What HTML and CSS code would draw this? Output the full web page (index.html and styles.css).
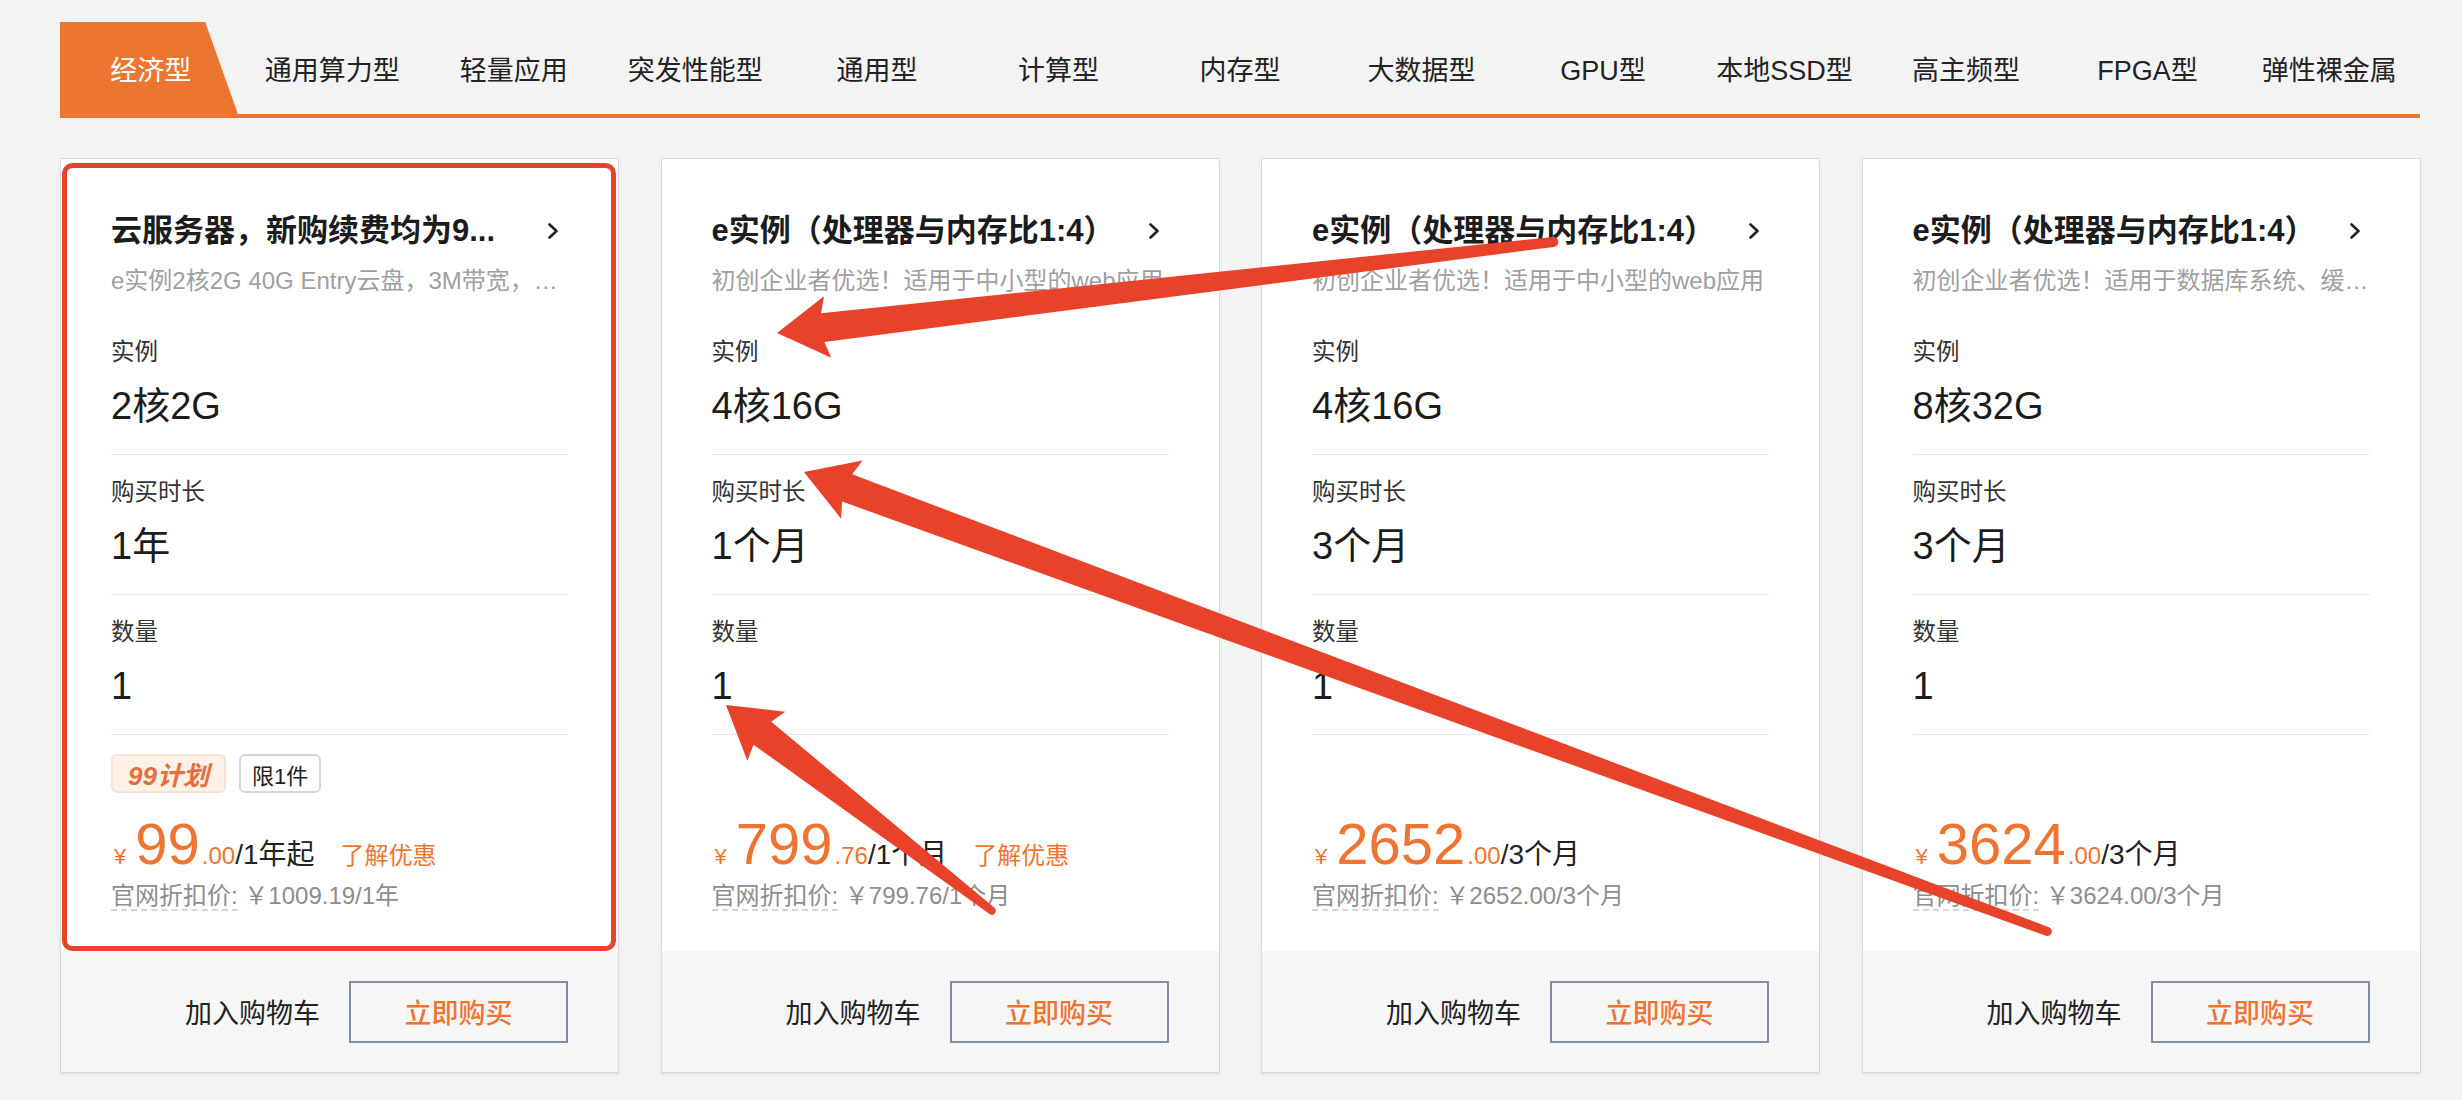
FILE: index.html
```html
<!DOCTYPE html>
<html lang="zh-CN">
<head>
<meta charset="utf-8">
<title>经济型</title>
<link rel="stylesheet" href="styles.css">
</head>
<body>
<div class="page">
  <nav class="tabs">
    <div class="tab active">经济型</div>
    <div class="tab">通用算力型</div>
    <div class="tab">轻量应用</div>
    <div class="tab">突发性能型</div>
    <div class="tab">通用型</div>
    <div class="tab">计算型</div>
    <div class="tab">内存型</div>
    <div class="tab">大数据型</div>
    <div class="tab">GPU型</div>
    <div class="tab">本地SSD型</div>
    <div class="tab">高主频型</div>
    <div class="tab">FPGA型</div>
    <div class="tab">弹性裸金属</div>
  </nav>

  <div class="cards">
    <div class="card">
      <div class="card-body">
        <div class="card-head">
          <div class="title-row"><span class="title">云服务器，新购续费均为9...</span><svg class="chev" viewBox="0 0 12 16"><path d="M2.5 1.5 L9.5 8 L2.5 14.5"/></svg></div>
          <div class="subtitle">e实例2核2G 40G Entry云盘，3M带宽，…</div>
        </div>
        <div class="spec"><div class="spec-label">实例</div><div class="spec-value">2核2G</div></div>
        <div class="spec"><div class="spec-label">购买时长</div><div class="spec-value">1年</div></div>
        <div class="spec"><div class="spec-label">数量</div><div class="spec-value">1</div></div>
        <div class="tags"><span class="tag tag-99">99计划</span><span class="tag tag-limit">限1件</span></div>
        <div class="price-row"><span class="yen">¥</span><span class="amount">99</span><span class="decimal">.00</span><span class="unit">/1年起</span><span class="promo">了解优惠</span></div>
        <div class="official"><span class="official-label">官网折扣价:</span> ￥1009.19/1年</div>
      </div>
      <div class="card-foot"><span class="cart">加入购物车</span><button class="buy">立即购买</button></div>
    </div>

    <div class="card">
      <div class="card-body">
        <div class="card-head">
          <div class="title-row"><span class="title">e实例（处理器与内存比1:4）</span><svg class="chev" viewBox="0 0 12 16"><path d="M2.5 1.5 L9.5 8 L2.5 14.5"/></svg></div>
          <div class="subtitle">初创企业者优选！适用于中小型的web应用</div>
        </div>
        <div class="spec"><div class="spec-label">实例</div><div class="spec-value">4核16G</div></div>
        <div class="spec"><div class="spec-label">购买时长</div><div class="spec-value">1个月</div></div>
        <div class="spec"><div class="spec-label">数量</div><div class="spec-value">1</div></div>
        <div class="tags"></div>
        <div class="price-row"><span class="yen">¥</span><span class="amount">799</span><span class="decimal">.76</span><span class="unit">/1个月</span><span class="promo">了解优惠</span></div>
        <div class="official"><span class="official-label">官网折扣价:</span> ￥799.76/1个月</div>
      </div>
      <div class="card-foot"><span class="cart">加入购物车</span><button class="buy">立即购买</button></div>
    </div>

    <div class="card">
      <div class="card-body">
        <div class="card-head">
          <div class="title-row"><span class="title">e实例（处理器与内存比1:4）</span><svg class="chev" viewBox="0 0 12 16"><path d="M2.5 1.5 L9.5 8 L2.5 14.5"/></svg></div>
          <div class="subtitle">初创企业者优选！适用于中小型的web应用</div>
        </div>
        <div class="spec"><div class="spec-label">实例</div><div class="spec-value">4核16G</div></div>
        <div class="spec"><div class="spec-label">购买时长</div><div class="spec-value">3个月</div></div>
        <div class="spec"><div class="spec-label">数量</div><div class="spec-value">1</div></div>
        <div class="tags"></div>
        <div class="price-row"><span class="yen">¥</span><span class="amount">2652</span><span class="decimal">.00</span><span class="unit">/3个月</span></div>
        <div class="official"><span class="official-label">官网折扣价:</span> ￥2652.00/3个月</div>
      </div>
      <div class="card-foot"><span class="cart">加入购物车</span><button class="buy">立即购买</button></div>
    </div>

    <div class="card">
      <div class="card-body">
        <div class="card-head">
          <div class="title-row"><span class="title">e实例（处理器与内存比1:4）</span><svg class="chev" viewBox="0 0 12 16"><path d="M2.5 1.5 L9.5 8 L2.5 14.5"/></svg></div>
          <div class="subtitle">初创企业者优选！适用于数据库系统、缓…</div>
        </div>
        <div class="spec"><div class="spec-label">实例</div><div class="spec-value">8核32G</div></div>
        <div class="spec"><div class="spec-label">购买时长</div><div class="spec-value">3个月</div></div>
        <div class="spec"><div class="spec-label">数量</div><div class="spec-value">1</div></div>
        <div class="tags"></div>
        <div class="price-row"><span class="yen">¥</span><span class="amount">3624</span><span class="decimal">.00</span><span class="unit">/3个月</span></div>
        <div class="official"><span class="official-label">官网折扣价:</span> ￥3624.00/3个月</div>
      </div>
      <div class="card-foot"><span class="cart">加入购物车</span><button class="buy">立即购买</button></div>
    </div>
  </div>

  <svg class="annot" viewBox="0 0 2462 1100" width="2462" height="1100">
    <rect class="annot-box" x="64.5" y="165.5" width="549" height="783" rx="8"/>
    <g transform="translate(777 333) rotate(-6.69)"><path class="annot-arrow" d="M0 0 L51 -31 L46 -14.5 L781.7 -5 A5 5 0 0 1 781.7 5 L46 14.5 L51 31 Z"/></g>
    <g transform="translate(804 472) rotate(20.28)"><path class="annot-arrow" d="M0 0 L51 -31 L46 -14.5 L1325.5 -4.5 A4.5 4.5 0 0 1 1325.5 4.5 L46 14.5 L51 31 Z"/></g>
    <g transform="translate(726 705) rotate(37.75)"><path class="annot-arrow" d="M0 0 L51 -31 L46 -14.5 L336 -4 A4 4 0 0 1 336 4 L46 14.5 L51 31 Z"/></g>
  </svg>
</div>
</body>
</html>
```

FILE: styles.css
```css
* { box-sizing: border-box; }

body {
  margin: 0;
  background: #f3f3f3;
  font-family: "Liberation Sans", "Noto Sans CJK SC", sans-serif;
  color: #222;
}

.page {
  position: relative;
  width: 2462px;
  height: 1100px;
  overflow: hidden;
}

/* Tabs */
.tabs {
  display: flex;
  width: 2360px;
  height: 96px;
  margin: 22px 0 0 60px;
  border-bottom: 4px solid #ed7532;
}

.tab {
  flex: 1;
  display: flex;
  align-items: center;
  justify-content: center;
  font-size: 27px;
  color: #222;
  white-space: nowrap;
}

.tab.active {
  background: #ed7532;
  color: #fff;
  clip-path: polygon(0 0, 80% 0, 98% 100%, 0 100%);
}

/* Cards */
.cards {
  display: grid;
  grid-template-columns: repeat(4, 559px);
  column-gap: 41.5px;
  margin: 40px 0 0 60px;
}

.card {
  height: 915px;
  display: flex;
  flex-direction: column;
  background: #f6f6f6;
  border: 1px solid #dadade;
  box-shadow: 0 2px 3px rgba(0, 0, 0, 0.06);
}

.card-body {
  background: #fff;
  padding: 52px 50px 40px;
}

.card-head {
  margin-bottom: 19px;
}

.title-row {
  display: flex;
  align-items: center;
  height: 40px;
}

.title {
  flex: 1;
  min-width: 0;
  font-size: 31px;
  line-height: 40px;
  font-weight: 600;
  color: #1c1c1c;
  white-space: nowrap;
  overflow: hidden;
  text-overflow: ellipsis;
}

.chev {
  flex: none;
  width: 12px;
  height: 16px;
  margin: 0 9px 0 20px;
}

.chev path {
  fill: none;
  stroke: #222;
  stroke-width: 2.6;
  stroke-linecap: round;
  stroke-linejoin: round;
}

.subtitle {
  margin-top: 15px;
  font-size: 24px;
  line-height: 30px;
  color: #a0a0a0;
  white-space: nowrap;
  overflow: hidden;
  text-overflow: ellipsis;
}

.spec {
  padding: 22px 0 25px;
  border-bottom: 1px solid #e9e9e9;
}

.spec-label {
  font-size: 23.5px;
  line-height: 30px;
  color: #333;
}

.spec-value {
  margin-top: 16px;
  font-size: 38px;
  line-height: 46px;
  color: #1c1c1c;
}

.tags {
  display: flex;
  gap: 13px;
  height: 40px;
  margin-top: 19px;
}

.tag {
  height: 39px;
  display: flex;
  align-items: center;
  border-radius: 6px;
  white-space: nowrap;
}

.tag-99 {
  background: #fdf0e7;
  border: 2px solid #f9e2d3;
  color: #e56f3c;
  font-size: 26px;
  font-style: italic;
  font-weight: 600;
  padding: 0 15px;
}

.tag-limit {
  background: #fff;
  border: 2px solid #d6d6d6;
  color: #222;
  font-size: 22px;
  padding: 0 11px;
}

.price-row {
  display: flex;
  align-items: baseline;
  height: 56px;
  margin-top: 22px;
  white-space: nowrap;
}

.yen {
  font-size: 22px;
  line-height: 1;
  color: #ef7431;
  margin-left: 3px;
  margin-right: 9px;
}

.amount {
  font-size: 58px;
  line-height: 56px;
  color: #ef7431;
}

.decimal {
  font-size: 24px;
  line-height: 1;
  color: #ef7431;
  margin-left: 2px;
}

.unit {
  font-size: 28px;
  line-height: 1;
  color: #222;
}

.promo {
  font-size: 24px;
  line-height: 1;
  color: #ef7431;
  margin-left: 26px;
}

.official {
  margin-top: 9px;
  font-size: 24px;
  line-height: 30px;
  color: #8e8e8e;
  white-space: nowrap;
}

.official-label {
  border-bottom: 2px dashed #d6d6d6;
}

.card-foot {
  flex: 1;
  display: flex;
  justify-content: flex-end;
  align-items: center;
  gap: 29px;
  padding: 0 50px;
}

.cart {
  font-size: 27px;
  color: #222;
}

.buy {
  width: 219px;
  height: 62px;
  border: 2px solid #7f8ba7;
  background: transparent;
  color: #ef7431;
  font-family: inherit;
  font-size: 27px;
  font-weight: 500;
  padding: 0;
}

/* Annotation overlay */
.annot {
  position: absolute;
  top: 0;
  left: 0;
  pointer-events: none;
}

.annot-box {
  fill: none;
  stroke: #e8432a;
  stroke-width: 5;
}

.annot-arrow {
  fill: #e8432a;
}
```
